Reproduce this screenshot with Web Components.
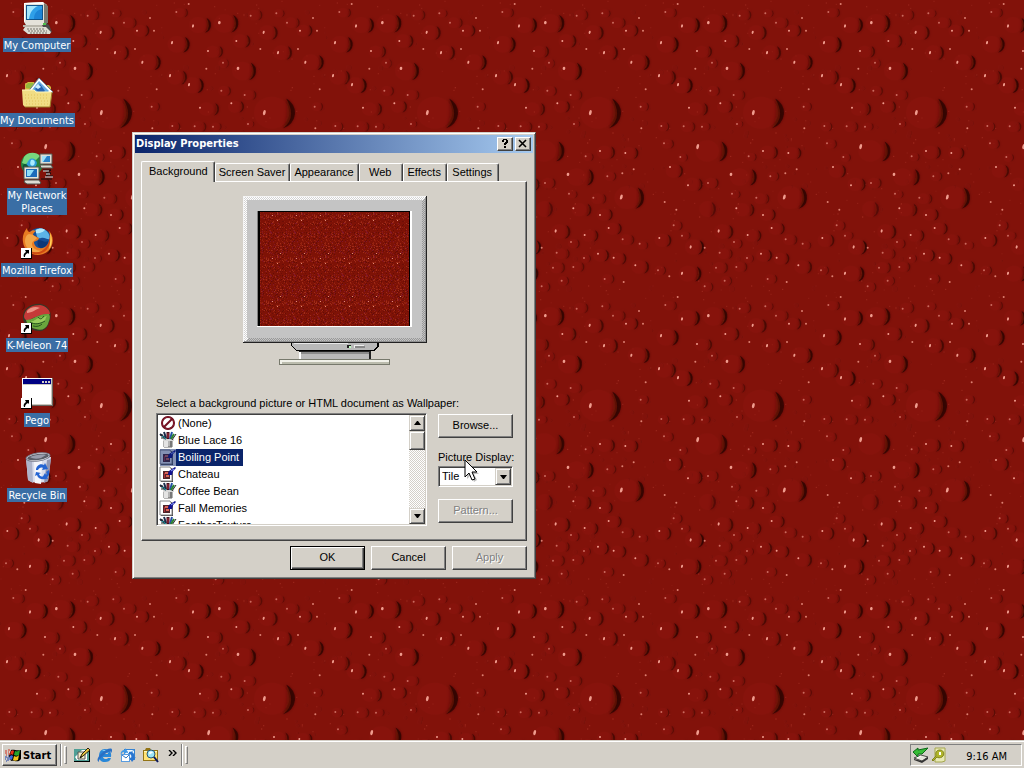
<!DOCTYPE html>
<html lang="en">
<head>
<meta charset="utf-8">
<meta name="viewport" content="width=device-width, initial-scale=1">
<title>Desktop</title>
<style>
  html, body {
    margin: 0;
    height: 100%;
    overflow: hidden;
  }
  body {
    --face: #d4d0c8;
    --shadow: #808080;
    --dark: #404040;
    --navy: #0a246a;
    --ui: "Liberation Sans", Arial, sans-serif;
    --tahoma: "DejaVu Sans Condensed", Tahoma, sans-serif;
    font: 11px/13px var(--ui);
    color: #000;
    background: #80120a;
  }
</style>
</head>
<body>
<desktop-screen>
  <desktop-icon icon="computer">My Computer</desktop-icon>
  <desktop-icon icon="documents">My Documents</desktop-icon>
  <desktop-icon icon="network">My Network<br>Places</desktop-icon>
  <desktop-icon icon="firefox" shortcut>Mozilla Firefox</desktop-icon>
  <desktop-icon icon="kmeleon" shortcut>K-Meleon 74</desktop-icon>
  <desktop-icon icon="pego" shortcut>Pego</desktop-icon>
  <desktop-icon icon="recycle">Recycle Bin</desktop-icon>

  <app-window slot="window" caption="Display Properties">
    <display-properties></display-properties>
  </app-window>

  <task-bar slot="taskbar"></task-bar>
</desktop-screen>

<script>
// ---------------------------------------------------------------- icons

const ICONS = {
  computer: [32, `
    <path d="M5 21 3 28l4 4h20l4-2-3-7-3-2z" fill="#4a4a4a"/>
    <path d="M3 1 22 0l4 3v17l-3 3H5l-2-3z" fill="#e4e2da"/>
    <path d="M23 1 27 4v17l-4 2z" fill="#7c7a70"/>
    <path d="M3 1 22 0l1 2H4v18l-1-1z" fill="#fff"/>
    <rect x="5" y="3" width="17" height="15" fill="#10548c"/>
    <rect x="6" y="4" width="15" height="13" fill="#2f9fe8"/>
    <path d="M6 4h11c-5 2-8 6-9 13H6z" fill="#a5e4fb"/>
    <path d="M13 17c0-6 3-9 8-10v10z" fill="#1d84d6"/>
    <path d="M2 23h19l1 2H2z" fill="#b9b6ab"/>
    <path d="M4 25h21l5 5-1 2H7l-5-4z" fill="#dedcd3"/>
    <path d="M6 27h18M7 29h19M9 31h18" stroke="#77756c" stroke-dasharray="2 1"/>
    <path d="M22 21h3v2h-3z" fill="#4fc24b"/>`],
  documents: [32, `
    <path d="M4 12V7l3-2h6l2 3h13l2 2v5H4z" fill="#d2b63f"/>
    <path d="M5 11V8l2-2h5l2 3v3z" fill="#93b93e"/>
    <path d="M18 1 32 15 22 25 6 16z" fill="#fff" stroke="#6d7f92"/>
    <path d="M18 4 28 14l-6 6L11 13z" fill="#65a9e2"/>
    <path d="m14 12 5-5 5 7-4 4z" fill="#2863b0"/>
    <path d="m14 10 3-3 3 3-3 2z" fill="#cdefff"/>
    <path d="M1 13h12l2 2h14l2 1-2 14H4L2 28z" fill="#f1dd84"/>
    <path d="M1 13h12l2 2h14" fill="none" stroke="#fff6bc"/>
    <path d="M4 30h25l2-15" fill="none" stroke="#9b7d27"/>
    <path d="M4 18h24M4 21h24M5 24h23M5 27h23" stroke="#e2c35c" stroke-dasharray="1 2"/>`],
  network: [32, `
    <circle cx="11" cy="12" r="11" fill="#27843e"/>
    <path d="M3 5c3-5 12-6 16-1l-4 4-4-1-2 4-5 1-3-1z" fill="#78d77d"/>
    <path d="M8 8c3-3 7-1 8 3-1 4-4 7-8 6-3-1-4-4 0-9z" fill="#2d9dda"/>
    <path d="M10 8c3-1 5 2 3 5-3 2-5-1-3-5z" fill="#a9ecff"/>
    <path d="M3 12c3 0 5 2 5 5l-4 3c-3-2-3-6-1-8z" fill="#0c5938"/>
    <path d="M19 2h12v10H19z" fill="#dddcd5" stroke="#57564e"/>
    <path d="M21 4h8v6h-8z" fill="#287fc8"/><path d="M21 4h5l-4 6h-1z" fill="#9ce1fa"/>
    <path d="M19 13h11l2 3H20z" fill="#dad8ce" stroke="#4d4c46"/>
    <path d="M3 15h15v12H3z" fill="#e5e4dc" stroke="#55544b"/>
    <path d="M5 17h11v8H5z" fill="#1c6bb9"/><path d="M6 18h7l-4 6H6z" fill="#8fddf9"/>
    <path d="M4 28h14l2 3-1 1H6l-3-2z" fill="#dedcd3" stroke="#4f4e49"/>
    <path d="M22 18h8l-5 3h5l-5 3h7m-12 3h11" fill="none" stroke="#101010"/>
    <path d="M22 19h6m-3 3h4m-5 3h8" fill="none" stroke="#cfe7ef"/>`],
  firefox: [32, `
    <circle cx="18" cy="14" r="13" fill="#154f97"/>
    <path d="M14 3c7-4 15 1 15 9-3 1-5-2-9-1-5 2-4-5-6-8z" fill="#5cb4e7"/>
    <path d="M15 3c3-2 7-2 9 0-2 2-6 4-9 3z" fill="#b4e9fa"/>
    <path d="M17 13c4 0 7 3 10 1 0 4-3 7-7 7-4-1-4-5-3-8z" fill="#0d3878"/>
    <path d="M2 15C1 9 3 5 6 1c0 2 1 4 3 4 2-2 4-2 6-1-2 1-3 3-3 4l6 3c0 2-3 3-5 4 0 5 6 8 11 5 3-2 5-5 5-10 0-4-1-6-2-7 7 6 6 17-1 22-10 7-23 1-24-10z" fill="#e87b22"/>
    <path d="M4 15c0-4 1-7 4-8 2 0 4 1 4 1l4 3c-1 2-5 3-5 6 0 5 7 8 12 6-8 6-18 1-19-8z" fill="#f2a548"/>
    <path d="M28 8c3 7 0 15-7 18-7 3-14 0-17-6 6 7 16 7 21 0 3-4 4-8 3-12z" fill="#cf4b12"/>
    <path d="M29 6c3 6 2 12-1 16 1-5 2-11 1-16z" fill="#ffd45c"/>`],
  kmeleon: [32, `
    <path d="M2 14C3 5 12 1 20 2c9 2 12 10 8 19-1 4-5 9-10 8C9 29 1 22 2 14z" fill="#363727"/>
    <path d="M3 14C4 6 12 3 19 3c6 1 10 5 10 9-7 0-14 2-21 6-3 1-5-1-5-4z" fill="#c53a38"/>
    <path d="M6 9c3-4 9-5 13-3-4 1-8 5-13 5z" fill="#ea9184"/>
    <path d="M5 18c7 0 13-7 23-6 2 3 0 7-1 10-2 5-7 7-12 5-6-1-9-5-10-9z" fill="#6aa63d"/>
    <path d="M8 19c4 2 8-3 10-3 3-1 5-1 8-2-2 2-1 5-4 6-4 2-9 2-14-1z" fill="#98cb5c"/>
    <path d="M9 20c4 3 10 2 15-1m-7-4c2 3 4 2 6-1M12 24c4 1 7 0 9-2" fill="none" stroke="#26531d"/>`],
  pego: [32, `
    <path d="M1 1h31v28H1z" fill="#c9c6bd"/>
    <path d="M1 1h30v1H2v26H1z" fill="#fff"/>
    <path d="M31 1h1v28H1v-1h30z" fill="#696660"/>
    <path d="M2 2h28v5H2z" fill="#000082"/>
    <path d="M21 4h2v2h-2zm3 0h2v2h-2zm3 0h2v2h-2z" fill="#d4d0c8"/>
    <path d="M2 8h28v19H2z" fill="#fff"/>`],
  recycle: [32, `
    <path d="m5 6 2 22c4 4 17 3 20 1l3-24z" fill="#d8dceb"/>
    <path d="m5 6 2 22 5 3L11 7z" fill="#aeb4ca"/>
    <path d="m13 9 1 22 6 1 1-24z" fill="#f5f6fb"/>
    <path d="m26 8-3 23 4-2 3-22z" fill="#9096b2"/>
    <ellipse cx="17" cy="5" rx="12" ry="4" fill="#f5f5f8" stroke="#777b8c" transform="rotate(-8 17 5)"/>
    <ellipse cx="17" cy="5" rx="11" ry="3" fill="#5a5d67" transform="rotate(-8 17 5)"/>
    <path d="M9 5c5-2 11-3 16-2l-5 3c-4 1-8 1-11-1z" fill="#999cab"/>
    <path d="M15 18c0-4 4-7 8-5l1-2 3 6-6 1 1-2c-2-1-4 0-5 2zm0 2 5 1-2 1c1 3 4 3 6 2l1 3c-4 1-8 0-9-4l-2 1zm10 0 3-2c1 3 0 6-2 7l1 2-6-1 3-5 1 2c1-1 1-2 0-3z" fill="#2464d2"/>`],
  start: [16, `
    <path d="M6 3c3-1 5 1 10 0v9l-2 2c-4 1-5-1-8 0L4 9z" fill="#000"/>
    <path d="M6 4c2-1 2-1 3 0L8 8C7 7 6 7 5 8z" fill="#e8331c"/>
    <path d="M10 4c2 1 3 0 5-1l-1 5c-2 1-3 1-5 0z" fill="#27a32c"/>
    <path d="M5 9c1-1 2-1 3 0l-1 4c-1-1-2-1-3 0z" fill="#3c6ce0"/>
    <path d="M9 9c2 1 3 1 5-1l-1 5c-2 1-4 1-5 0z" fill="#f2c51b"/>
    <path d="M0 4h2M3 3h2M0 6h2M3 5h1M3 7h2M1 8h1" stroke="#d4311d"/>
    <path d="M0 10h2M3 9h1M0 12h1M2 11h2M1 14h1M2 13h2" stroke="#1b3fa6"/>`],
  desk: [16, `
    <path d="M0 2h16v13H0z" fill="#000"/><path d="M0 2h15v12H0z" fill="#4f9f96"/>
    <path d="M1 10 8 3h5v10H3z" fill="#fff"/><path d="M4 5h7v7H4z" fill="#f5f0ce" stroke="#555"/>
    <path d="m6 11 2-4 6-6 2 2-7 6z" fill="#e8c341" stroke="#262010"/><path d="m6 11 1-2 1 1z" fill="#000"/>`],
  ie: [16, `
    <path d="M8 2c4 0 7 3 6 8H6c0 2 4 3 5 1h3c-1 3-3 4-6 4-4 0-6-2-6-6 0-4 2-7 6-7zm-2 5h5c0-3-5-3-5 0z" fill="#2887d8"/>
    <path d="M5 4c2-2 6-1 7 2-2-2-5-2-7-2z" fill="#8cd7fa"/>
    <path d="M2 15c-3-1-1-6 3-9 4-4 10-6 10-3 0 1 0 2-1 3 0-3-3-1-6 1-4 3-7 7-6 8z" fill="#2a70c4"/>`],
  outlook: [16, `
    <path d="M4 2h11v11H4z" fill="#3482d2"/><path d="M5 3h9v9H5z" fill="#eef7ff"/>
    <path d="m5 3 4 4 5-4" fill="none" stroke="#66a6df"/>
    <path d="M1 7h9v8H1z" fill="#5a9de0"/><path d="M2 8h7v6H2z" fill="#fff"/>
    <path d="m2 8 4 3 3-3" fill="none" stroke="#3478c0"/>
    <path d="M9 5c4-1 6 2 5 6l2-1-4 5-3-5 2 1c1-2 0-4-2-4z" fill="#2a76d0"/>
    <path d="M1 8c-1-3 1-5 4-5V1l3 4-4 2V5C2 5 2 6 1 8z" fill="#4199e5"/>`],
  search: [16, `
    <path d="M0 3h2l1-2h4l1 2h7v11H0z" fill="#937415"/>
    <path d="M1 4h13v9H1z" fill="#ffe375"/><path d="M1 4h13v1H1z" fill="#fff9c3"/>
    <circle cx="8" cy="7" r="4" fill="#9be5f6" stroke="#275675"/>
    <path d="M6 6c1-2 3-2 4 0-2 0-3 1-3 2z" fill="#fff"/>
    <path d="m11 10 4 5" stroke="#0a1960" stroke-width="2"/>`],
  eject: [16, `
    <path d="m1 11 7-3 7 2-6 4z" fill="#e6e5dc" stroke="#4d4d48"/><path d="m1 12 8 2 6-4v2l-6 4-8-3z" fill="#333"/>
    <path d="m0 5 5-4v2l10-2-6 6H5v3z" fill="#37bd36" stroke="#0c6818"/><path d="m4 11 4-2" stroke="#fff"/>`],
  traytool: [16, `
    <path d="M4 1h10v13l-3 1H4z" fill="#e8e9b4" stroke="#a5a64e"/>
    <path d="M1 13 5 9c-1-4 1-6 4-6 4 0 5 5 2 7-2 1-4 1-5 0l-4 4z" fill="#b0b529" stroke="#82841f"/>
    <path d="M8 5h2v3H8z" fill="#fff"/>`],
  none: [16, `
    <circle cx="8" cy="8" r="6" fill="#fff" stroke="#5e0a18" stroke-width="2"/>
    <circle cx="8" cy="8" r="6" fill="none" stroke="#8e1c30"/>
    <path d="m4 12 8-8" stroke="#711020" stroke-width="2"/>`],
  bitmap: [16, `
    <path d="M4 8h8v7H4z" fill="#b5b5b5" stroke="#666"/><path d="M4 8h4v7H4z" fill="#e4e4e4"/>
    <path d="M3 7h11v2H3z" fill="#d8d8d8"/><path d="M10 9h2v6h-2z" fill="#777"/>
    <path d="M0 2 6 7M4 0l2 6" stroke="#1a2c4a" stroke-width="2"/><path d="M2 4 6 7" stroke="#26b3ac"/>
    <path d="M8 0v7" stroke="#3f1220" stroke-width="3"/><path d="M8 1v5" stroke="#c22a3a"/>
    <path d="m12 0-2 7" stroke="#224ea3" stroke-width="2"/><path d="m14 2-3 5" stroke="#29822b" stroke-width="2"/>
    <path d="m16 2-4 6" stroke="#222"/><path d="M0 3h3m-2 3h3" stroke="#222"/>`],
  picture: [16, `
    <path d="M1 2h11l1 2v12H1z" fill="#444"/><path d="M0 1h10l2 3v11H0z" fill="#fff" stroke="#858585"/>
    <path d="M3 5h7v8H3z" fill="#51252a"/><path d="M5 6h3v2H5zm1 3h3v2H6z" fill="#dd6257"/>
    <path d="M4 7h1v5H4z" fill="#b02e35"/>
    <path d="m8 9 1-4 6-4 1 1-3 3-1 4z" fill="#11118f"/><path d="m11 5 3-2" stroke="#8ca3ff"/>`]
}

/**
 * Draws one of the named icons at its natural size.
 */
class WinIcon extends HTMLElement {
  constructor () {
    super()
    this.attachShadow({ mode: 'open' })
  }

  connectedCallback () {
    const [size, shapes] = ICONS[this.getAttribute('name')]
    this.shadowRoot.innerHTML = `
      <style>
        :host { display: block; flex: none; }
        svg { display: block; overflow: visible; }
      </style>
      <svg width="${size}" height="${size}" viewBox="0 0 ${size} ${size}" aria-hidden="true">${shapes}</svg>`
  }
}
customElements.define('win-icon', WinIcon)

// ------------------------------------------------------------ wallpaper

const TILE_W = 489
const TILE_H = 879

// glint x, glint y, right edge of the drop, centre y, radius
const DROPS = [
  [304, 338, 396, 338, 48], [225, 205, 279, 213, 28], [169, 68, 226, 70, 28], [90, 78, 144, 75, 24],
  [263, 47, 298, 45, 16], [302, 97, 344, 98, 22], [220, 123, 262, 123, 20], [372, 68, 410, 68, 16],
  [411, 92, 448, 92, 18], [345, 158, 387, 158, 22], [427, 187, 482, 187, 24], [27, 128, 80, 133, 25],
  [135, 153, 180, 155, 18], [21, 227, 72, 232, 22], [78, 254, 122, 256, 24], [111, 323, 168, 327, 20],
  [205, 310, 243, 320, 18], [175, 272, 204, 273, 15], [245, 285, 280, 285, 15], [95, 379, 130, 380, 16],
  [40, 36, 75, 38, 14], [455, 320, 480, 320, 13], [150, 380, 176, 380, 12], [255, 372, 274, 372, 10],
  [180, 188, 198, 190, 14], [340, 40, 365, 40, 12], [28, 378, 52, 380, 14], [36, 430, 66, 432, 14],
  [137, 440, 226, 453, 32], [237, 523, 314, 531, 26], [397, 591, 465, 593, 34], [54, 501, 93, 513, 20],
  [108, 556, 152, 553, 20], [168, 549, 200, 549, 16], [333, 453, 378, 457, 20], [409, 459, 448, 459, 18],
  [85, 471, 108, 473, 12], [290, 469, 314, 471, 12], [355, 529, 382, 529, 14], [253, 625, 307, 629, 20],
  [333, 645, 371, 644, 18], [313, 593, 352, 596, 16], [0, 0, 192, 627, 24], [200, 693, 244, 695, 22],
  [287, 705, 328, 707, 18], [359, 684, 398, 686, 18], [401, 718, 436, 719, 16], [116, 741, 156, 741, 23],
  [203, 758, 242, 761, 16], [246, 726, 272, 731, 14], [327, 761, 360, 766, 19], [374, 773, 412, 776, 18],
  [439, 796, 480, 801, 20], [192, 803, 228, 803, 17], [253, 801, 286, 801, 15], [90, 820, 148, 821, 24],
  [22, 714, 58, 721, 20], [218, 842, 240, 843, 14], [347, 837, 376, 837, 14], [158, 859, 184, 861, 14],
  [18, 811, 42, 811, 14], [285, 774, 306, 776, 12], [65, 676, 92, 677, 14], [90, 707, 116, 707, 12],
  [240, 581, 266, 583, 12], [452, 731, 478, 736, 12]
]

const GLINTS = [
  [470, 268], [457, 385], [462, 92], [73, 629], [38, 606], [434, 508], [52, 829], [130, 206],
  [77, 12], [405, 147], [292, 147], [450, 54], [400, 520], [158, 743], [404, 846]
]

/**
 * Small repeatable random number source, so every tile is the same.
 *
 * @param {number} seed - The first state.
 * @returns {Function} A function that gives numbers from 0 to 1.
 */
function seeded (seed) {
  let s = seed
  return () => {
    s = (s * 16807) % 2147483647
    return s / 2147483647
  }
}

/**
 * One drop: a faintly lit body, a soft shadow along its right side, a glint on its left.
 */
function dropShape ([gx, gy, edge, cy, r]) {
  const cx = edge - r
  const depth = r > 22 ? 0.7 : r > 17 ? 0.5 : 0.36
  const left = gx || cx
  const big = r > 25
  const top = `${cx + r * 0.45} ${cy - r * 0.89}`
  const bottom = `${cx + r * 0.25} ${cy + r * 0.97}`
  const glint = gx === 0 ? '' : `<ellipse cx="${gx}" cy="${gy}" rx="${big ? 4 : 3}" ry="${r > 30 ? 8 : r > 20 ? 5 : 3}" transform="rotate(15 ${gx} ${gy})" fill="#f5a394" opacity="${r > 17 ? 0.95 : 0.6}"/>`
  return `
    <path d="M${top}A${r} ${r} 0 0 1 ${bottom}Q${cx + r * 0.6} ${cy + r * 0.3} ${top}" fill="#4a0805" opacity="${depth}" filter="url(#wide)"/>
    <path d="M${top}A${r} ${r} 0 0 1 ${bottom}Q${cx + r * 1.15} ${cy + r * 0.3} ${top}" fill="#240504" opacity="${depth}" filter="url(#soft)"/>
    <ellipse cx="${(left + cx) / 2}" cy="${cy}" rx="${r * 1.1}" ry="${r}" fill="#8e150d" opacity=".35"/>
    ${glint}`
}

class WallpaperLayer extends HTMLElement {
  constructor () {
    super()
    this.attachShadow({ mode: 'open' })
    const rnd = seeded(77)
    let dust = ''
    for (let i = 0; i < 150; i++) {
      const x = Math.round(rnd() * TILE_W)
      const y = Math.round(rnd() * TILE_H)
      const r = 3 + rnd() * 5
      dust += i % 3
        ? `<circle cx="${x}" cy="${y}" r="2" fill="#c24436" opacity="${0.1 + rnd() * 0.4}"/>`
        : `<circle cx="${x}" cy="${y}" r="${r}" fill="#4c0905" opacity=".25"/><circle cx="${x - 2}" cy="${y}" r="${r}" fill="#84130b" opacity=".8"/>`
    }
    const glints = GLINTS.map(([x, y]) => `<circle cx="${x}" cy="${y}" r="3" fill="#f39a8a" opacity=".8"/>`).join('')
    this.shadowRoot.innerHTML = `
      <style>
        :host { display: block; }
        svg { display: block; width: 100%; height: 100%; }
      </style>
      <svg aria-hidden="true">
        <defs>
          <filter id="soft" x="-60%" y="-40%" width="220%" height="180%"><feGaussianBlur stdDeviation="2"/></filter>
          <filter id="wide" x="-60%" y="-40%" width="220%" height="180%"><feGaussianBlur stdDeviation="4"/></filter>
          <pattern id="tile" width="163" height="293" patternUnits="userSpaceOnUse" viewBox="0 0 ${TILE_W} ${TILE_H}">
            <rect width="${TILE_W}" height="${TILE_H}" fill="#82120a"/>
            ${dust}${DROPS.map(dropShape).join('')}${glints}
          </pattern>
        </defs>
        <rect width="100%" height="100%" fill="url(#tile)"/>
      </svg>`
  }
}
customElements.define('wallpaper-layer', WallpaperLayer)

// -------------------------------------------------------------- desktop

class DesktopScreen extends HTMLElement {
  constructor () {
    super()
    this.attachShadow({ mode: 'open' })
    this.shadowRoot.innerHTML = `
      <style>
        :host {
          display: grid;
          grid-template-rows: 1fr auto;
          height: 100vh;
          position: relative;
          overflow: hidden;
        }
        wallpaper-layer { position: absolute; inset: 0; }
        .icons {
          position: relative;
          display: grid;
          grid-auto-rows: 75px;
          justify-content: start;
          min-height: 0;
        }
        .pointer { position: absolute; left: 464px; top: 459px; pointer-events: none; }
        ::slotted([slot="window"]) { position: absolute; left: 132px; top: 132px; }
        ::slotted([slot="taskbar"]) { position: relative; }
      </style>
      <wallpaper-layer></wallpaper-layer>
      <main class="icons"><slot></slot></main>
      <slot name="window"></slot>
      <slot name="taskbar"></slot>
      <svg class="pointer" width="16" height="26" viewBox="0 0 16 26" aria-hidden="true">
        <path d="M3 4v16l4-4 3 7 3-2-3-6h5z" opacity=".25"/>
        <path d="M1 1v17l4-4 3 7 3-1-3-7h5z" fill="#fff" stroke="#000"/>
      </svg>`
  }
}
customElements.define('desktop-screen', DesktopScreen)

class DesktopIcon extends HTMLElement {
  constructor () {
    super()
    this.attachShadow({ mode: 'open' })
  }

  connectedCallback () {
    const arrow = this.hasAttribute('shortcut')
      ? `<svg class="arrow" width="11" height="11" viewBox="0 0 11 11" aria-hidden="true">
           <path d="M0 0h11v11H0z" fill="#000"/><path d="M0 0h10v10H0z" fill="#fff"/>
           <path d="M4 2h4v4L7 5C5 6 4 7 4 9H3C2 7 3 5 5 4z" fill="#000"/>
         </svg>`
      : ''
    this.shadowRoot.innerHTML = `
      <style>
        :host {
          display: flex;
          flex-direction: column;
          align-items: center;
          gap: 4px;
          width: 74px;
          padding-top: 2px;
          font-family: var(--tahoma);
        }
        .picture { position: relative; }
        .arrow { position: absolute; left: 0; bottom: 0; }
        .label {
          padding: 1px 1px 0;
          color: #fff;
          background: #3a6ea5;
          text-align: center;
          white-space: nowrap;
        }
      </style>
      <div class="picture"><win-icon name="${this.getAttribute('icon')}"></win-icon>${arrow}</div>
      <div class="label"><slot></slot></div>`
  }
}
customElements.define('desktop-icon', DesktopIcon)

// ------------------------------------------------------- window and parts

class PushButton extends HTMLElement {
  constructor () {
    super()
    this.attachShadow({ mode: 'open' })
  }

  connectedCallback () {
    const disabled = this.hasAttribute('disabled') ? 'disabled' : ''
    this.shadowRoot.innerHTML = `
      <style>
        :host { display: block; width: 75px; }
        button {
          display: block;
          width: 100%;
          height: 24px;
          margin: 0;
          padding: 0 0 2px;
          font: inherit;
          color: #000;
          background: var(--face);
          border: 1px solid;
          border-color: #fff var(--dark) var(--dark) #fff;
          box-shadow: inset -1px -1px var(--shadow);
        }
        button:disabled { color: var(--shadow); text-shadow: 1px 1px #fff; }
        :host([default]) button {
          border-color: #000;
          box-shadow: inset 1px 1px #fff, inset -1px -1px var(--dark), inset -2px -2px var(--shadow);
        }
      </style>
      <button type="button" ${disabled}><slot></slot></button>`
  }
}
customElements.define('push-button', PushButton)

class AppWindow extends HTMLElement {
  constructor () {
    super()
    this.attachShadow({ mode: 'open' })
  }

  connectedCallback () {
    this.shadowRoot.innerHTML = `
      <style>
        :host {
          display: block;
          box-sizing: border-box;
          padding: 1px;
          background: var(--face);
          border: 1px solid;
          border-color: var(--face) var(--dark) var(--dark) var(--face);
          box-shadow: inset 1px 1px #fff, inset -1px -1px var(--shadow);
        }
        .frame { padding: 1px; }
        header {
          display: flex;
          align-items: center;
          height: 18px;
          padding: 0 2px 0 1px;
          background: linear-gradient(to right, #0a246a, #a6caf0);
          color: #fff;
        }
        h1 { flex: 1; margin: 0; font: bold 11px/18px var(--tahoma); }
        button {
          display: block;
          width: 16px;
          height: 14px;
          margin: 0 0 0 2px;
          padding: 0;
          background: var(--face);
          border: 1px solid;
          border-color: #fff var(--dark) var(--dark) #fff;
          box-shadow: inset -1px -1px var(--shadow);
        }
        svg { display: block; margin: auto; }
      </style>
      <section class="frame" aria-labelledby="caption">
        <header>
          <h1 id="caption">${this.getAttribute('caption')}</h1>
          <button type="button" aria-label="Help">
            <svg width="12" height="10" viewBox="0 0 12 10" shape-rendering="crispEdges"><path d="M3 1h1V0h4v1h1v3H8v1H7v1H5V4h1V3h1V1H5v2H3zM5 7h2v2H5z"/></svg>
          </button>
          <button type="button" aria-label="Close">
            <svg width="12" height="10" viewBox="0 0 12 10"><path d="m2 1 7 7m0-7L2 8" stroke="#000" stroke-width="1.6"/></svg>
          </button>
        </header>
        <slot></slot>
      </section>`
  }
}
customElements.define('app-window', AppWindow)

class TabStrip extends HTMLElement {
  constructor () {
    super()
    this.attachShadow({ mode: 'open' })
    const tabs = ['Background', 'Screen Saver', 'Appearance', 'Web', 'Effects', 'Settings']
    this.shadowRoot.innerHTML = `
      <style>
        :host { display: block; }
        div { display: flex; align-items: flex-end; height: 20px; }
        button {
          height: 18px;
          min-width: 44px;
          margin: 0;
          padding: 0 4px 0 3px;
          font: inherit;
          color: inherit;
          background: var(--face);
          border: 1px solid;
          border-color: #fff var(--dark) transparent #fff;
          border-bottom: 0;
          border-radius: 2px 2px 0 0;
          box-shadow: inset -1px 0 var(--shadow);
        }
        button:last-child { min-width: 52px; }
        button[aria-selected="true"] {
          position: relative;
          height: 21px;
          margin-bottom: -1px;
          padding: 0 6px 2px 7px;
        }
      </style>
      <div role="tablist">
        ${tabs.map((t, i) => `<button type="button" role="tab" aria-selected="${i === 0}">${t}</button>`).join('')}
      </div>`
  }
}
customElements.define('tab-strip', TabStrip)

/**
 * The monitor that previews the chosen wallpaper.
 */
class MonitorPreview extends HTMLElement {
  constructor () {
    super()
    this.attachShadow({ mode: 'open' })
    const rnd = seeded(4242)
    const tints = ['#640d05', '#96220f', '#8c1a0c', '#a02c1a', '#6e0e06', '#821626']
    let grain = ''
    for (let i = 0; i < 420; i++) {
      grain += `<path d="M${Math.floor(rnd() * 24)} ${Math.floor(rnd() * 43)}h1v1h-1z" fill="${tints[i % 6]}"/>`
    }
    this.shadowRoot.innerHTML = `
      <style>
        :host { display: block; }
        svg { display: block; margin: 0 auto; }
      </style>
      <svg width="184" height="169" viewBox="0 0 184 169" role="img" aria-label="Wallpaper preview" shape-rendering="crispEdges">
        <defs>
          <pattern id="grain" width="24" height="43" patternUnits="userSpaceOnUse">
            <path d="M0 0h24v43H0z" fill="#7e1206"/>${grain}
            <path d="M5 19h1v1H5zM13 14h1v1h-1zM10 24h1v1h-1z" fill="#e08a74"/>
          </pattern>
          <pattern id="light" width="2" height="2" patternUnits="userSpaceOnUse">
            <path d="M0 0h2v2H0z" fill="#d4d4d4"/><path d="M0 0h1v1H0zM1 1h1v1H1z" fill="#fff"/>
          </pattern>
          <pattern id="dim" width="2" height="2" patternUnits="userSpaceOnUse">
            <path d="M0 0h2v2H0z" fill="#c4c4c4"/><path d="M0 0h1v1H0zM1 1h1v1H1z" fill="#989898"/>
          </pattern>
        </defs>
        <path d="M0 0h184v147H0z" fill="#222"/>
        <path d="M0 0h183v146H0z" fill="#f4f4f4"/>
        <path d="M1 1h182v145H1z" fill="url(#light)"/>
        <path d="M183 1v145H1l4-4h174V5z" fill="url(#dim)"/>
        <path d="M182 1h1v145H1v-1h181z" fill="#909090"/>
        <path d="M4 4h175v138H4z" fill="#c4c4c4"/>
        <path d="M14 15h155v116H14z" fill="#fff"/>
        <path d="M14 15h153v115H14z" fill="#808080"/>
        <path d="M15 15h152v115H15z" fill="#000"/>
        <path d="M17 16h149v114H17z" fill="url(#grain)"/>
        <path d="M166 16h1v114h-1z" fill="#000"/><path d="M167 16h1v115h-1z" fill="#fff"/>
        <path d="M48 147h88v3l-4 5H54l-6-5z" fill="#000"/>
        <path d="M49 147h85v3l-4 4H54l-5-4z" fill="#b9b9b9"/><path d="M51 147h54v1H51z" fill="#e8e8e8"/>
        <path d="M104 149h4v3h-4z" fill="#222"/><path d="M106 150h2v2h-2z" fill="#bdffbd"/>
        <path d="M111 149h10v3h-10z" fill="#eee"/><path d="M112 150h10v2h-10z" fill="#888"/>
        <path d="M56 155h72v9H56z" fill="#222"/><path d="M56 156h70v8H56z" fill="#fff"/>
        <path d="M58 156h68v8H58z" fill="#b9b9b9"/><path d="M58 156h68v2H58z" fill="#8b8b8b"/>
        <path d="M36 163h111v6H36z" fill="#77796c"/><path d="M37 164h109v4H37z" fill="#f1f1e9"/>
        <path d="M39 166h107v2H39z" fill="#bbbcad"/>
      </svg>`
  }
}
customElements.define('monitor-preview', MonitorPreview)

class PictureList extends HTMLElement {
  constructor () {
    super()
    this.attachShadow({ mode: 'open' })
    const rows = [
      ['none', '(None)'],
      ['bitmap', 'Blue Lace 16'],
      ['picture', 'Boiling Point'],
      ['picture', 'Chateau'],
      ['bitmap', 'Coffee Bean'],
      ['picture', 'Fall Memories'],
      ['bitmap', 'FeatherTexture']
    ]
    const selected = 2
    this.shadowRoot.innerHTML = `
      <style>
        :host {
          display: flex;
          box-sizing: border-box;
          height: 113px;
          background: #fff;
          border: 1px solid;
          border-color: var(--shadow) #fff #fff var(--shadow);
          box-shadow: inset 1px 1px var(--dark), inset -1px -1px var(--face);
          padding: 1px;
        }
        ul { flex: 1; margin: 0; padding: 0 2px; list-style: none; overflow: hidden; }
        li { display: flex; height: 17px; }
        span { padding: 2px 4px 2px 2px; }
        .selected span { color: #fff; background: var(--navy); }
        .selected win-icon { position: relative; }
        .selected win-icon::after {
          content: "";
          position: absolute;
          inset: 0;
          background: rgba(10, 36, 106, 0.5);
        }
        .bar {
          display: flex;
          flex-direction: column;
          width: 16px;
          background: repeating-conic-gradient(#fff 0 25%, var(--face) 0 50%) 0 0 / 2px 2px;
        }
        .bar button, .thumb {
          box-sizing: border-box;
          width: 16px;
          height: 16px;
          margin: 0;
          padding: 0;
          background: var(--face);
          border: 1px solid;
          border-color: var(--face) var(--dark) var(--dark) var(--face);
          box-shadow: inset 1px 1px #fff, inset -1px -1px var(--shadow);
        }
        .bar .thumb { height: 19px; margin-bottom: auto; }
        svg { display: block; margin: auto; }
      </style>
      <ul role="listbox" aria-label="Wallpaper" tabindex="0">
        ${rows.map(([icon, text], i) => `
          <li role="option" aria-selected="${i === selected}" class="${i === selected ? 'selected' : ''}"><win-icon name="${icon}"></win-icon><span>${text}</span></li>`).join('')}
      </ul>
      <div class="bar">
        <button type="button" aria-label="Scroll up"><svg width="7" height="4" viewBox="0 0 7 4"><path d="M0 4h7L4 0H3z"/></svg></button>
        <div class="thumb"></div>
        <button type="button" aria-label="Scroll down"><svg width="7" height="4" viewBox="0 0 7 4"><path d="M0 0h7L4 4H3z"/></svg></button>
      </div>`
  }
}
customElements.define('picture-list', PictureList)

class DropDown extends HTMLElement {
  constructor () {
    super()
    this.attachShadow({ mode: 'open' })
    this.shadowRoot.innerHTML = `
      <style>
        :host { display: block; }
        label { display: block; margin-bottom: 2px; white-space: nowrap; }
        .box { position: relative; }
        select {
          display: block;
          appearance: none;
          box-sizing: border-box;
          width: 100%;
          height: 21px;
          margin: 0;
          padding: 0 20px 0 3px;
          font: inherit;
          color: #000;
          background: #fff;
          border: 1px solid;
          border-color: var(--shadow) #fff #fff var(--shadow);
          border-radius: 0;
          box-shadow: inset 1px 1px var(--dark), inset -1px -1px var(--face);
        }
        .arrow {
          position: absolute;
          inset: 2px 2px 2px auto;
          box-sizing: border-box;
          display: grid;
          place-items: center;
          width: 16px;
          background: var(--face);
          border: 1px solid;
          border-color: var(--face) var(--dark) var(--dark) var(--face);
          box-shadow: inset 1px 1px #fff, inset -1px -1px var(--shadow);
          pointer-events: none;
        }
      </style>
      <label for="display">Picture Display:</label>
      <div class="box">
        <select id="display">
          <option>Tile</option>
        </select>
        <div class="arrow"><svg width="7" height="4" viewBox="0 0 7 4"><path d="M0 0h7L4 4H3z"/></svg></div>
      </div>`
  }
}
customElements.define('drop-down', DropDown)

class DisplayProperties extends HTMLElement {
  constructor () {
    super()
    this.attachShadow({ mode: 'open' })
    this.shadowRoot.innerHTML = `
      <style>
        :host { display: block; padding: 8px 6px 6px 6px; }
        .panel {
          padding: 14px 13px 14px 14px;
          border: 1px solid;
          border-color: #fff var(--dark) var(--dark) #fff;
          box-shadow: inset -1px -1px var(--shadow);
        }
        p { margin: 32px 0 3px; white-space: nowrap; }
        .row { display: flex; gap: 11px; }
        .side { display: flex; flex-direction: column; padding-top: 1px; width: 75px; }
        drop-down { margin: 13px 0 12px; }
        picture-list { width: 271px; }
        footer { display: flex; justify-content: flex-end; gap: 6px; margin-top: 5px; }
      </style>
      <tab-strip></tab-strip>
      <div class="panel" role="tabpanel">
        <monitor-preview></monitor-preview>
        <p>Select a background picture or HTML document as Wallpaper:</p>
        <div class="row">
          <picture-list></picture-list>
          <div class="side">
            <push-button>Browse...</push-button>
            <drop-down></drop-down>
            <push-button disabled>Pattern...</push-button>
          </div>
        </div>
      </div>
      <footer>
        <push-button default>OK</push-button>
        <push-button>Cancel</push-button>
        <push-button disabled>Apply</push-button>
      </footer>`
  }
}
customElements.define('display-properties', DisplayProperties)

// -------------------------------------------------------------- taskbar

class TaskBar extends HTMLElement {
  constructor () {
    super()
    this.attachShadow({ mode: 'open' })
    this.shadowRoot.innerHTML = `
      <style>
        :host {
          display: flex;
          align-items: center;
          box-sizing: border-box;
          height: 28px;
          padding: 2px 2px 0;
          background: var(--face);
          box-shadow: inset 0 1px var(--face), inset 0 2px #fff;
          font-family: var(--tahoma);
        }
        button { margin: 0; padding: 0; font: inherit; color: inherit; background: none; border: 0; }
        .start {
          display: flex;
          align-items: center;
          gap: 2px;
          height: 22px;
          padding: 0 5px 0 2px;
          font-weight: bold;
          background: var(--face);
          border: 1px solid;
          border-color: #fff var(--dark) var(--dark) #fff;
          box-shadow: inset -1px -1px var(--shadow);
        }
        .line { width: 1px; height: 22px; margin: 0 3px; background: var(--shadow); box-shadow: 1px 0 #fff; }
        .grip {
          box-sizing: border-box;
          width: 3px;
          height: 18px;
          border: 1px solid;
          border-color: #fff var(--shadow) var(--shadow) #fff;
        }
        .quick { display: flex; gap: 7px; padding: 0 8px 0 7px; }
        .more { width: 11px; height: 14px; margin-bottom: 6px; }
        .tray {
          display: flex;
          align-items: center;
          gap: 2px;
          box-sizing: border-box;
          height: 22px;
          margin-left: auto;
          padding: 0 14px 0 2px;
          border: 1px solid;
          border-color: var(--shadow) #fff #fff var(--shadow);
        }
        time { margin-left: 17px; padding-top: 2px; }
      </style>
      <button type="button" class="start"><win-icon name="start"></win-icon>Start</button>
      <div class="line"></div>
      <div class="grip"></div>
      <nav class="quick" aria-label="Quick Launch">
        <button type="button" aria-label="Show Desktop"><win-icon name="desk"></win-icon></button>
        <button type="button" aria-label="Internet Explorer"><win-icon name="ie"></win-icon></button>
        <button type="button" aria-label="Outlook Express"><win-icon name="outlook"></win-icon></button>
        <button type="button" aria-label="Search"><win-icon name="search"></win-icon></button>
      </nav>
      <button type="button" class="more" aria-label="More"><svg width="9" height="6" viewBox="0 0 9 6"><path d="m1 0 3 3-3 3m4-6 3 3-3 3" fill="none" stroke="#000" stroke-width="1.4"/></svg></button>
      <div class="line"></div>
      <div class="grip"></div>
      <div class="tray">
        <win-icon name="eject"></win-icon>
        <win-icon name="traytool"></win-icon>
        <time datetime="09:16">9:16 AM</time>
      </div>`
  }
}
customElements.define('task-bar', TaskBar)
</script>
</body>
</html>
